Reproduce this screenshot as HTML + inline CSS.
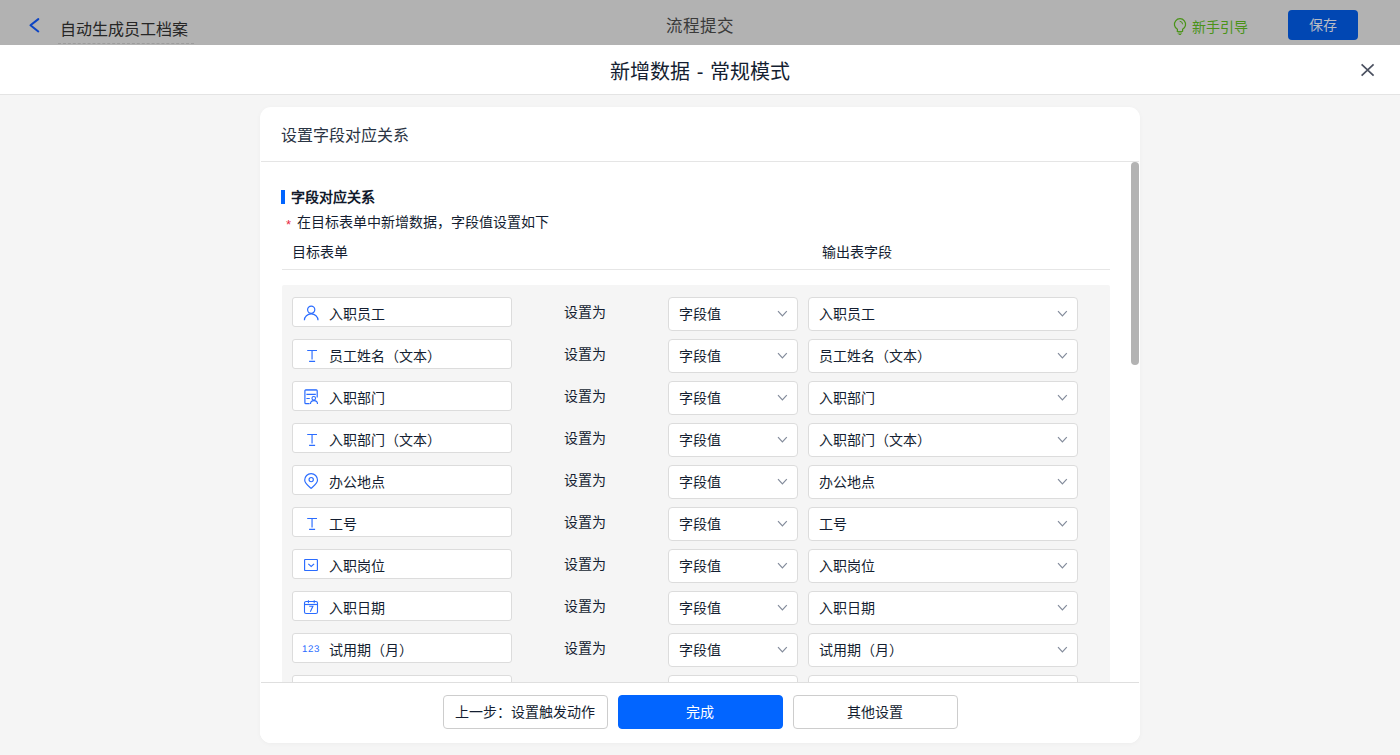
<!DOCTYPE html>
<html lang="zh-CN">
<head>
<meta charset="utf-8">
<title>新增数据 - 常规模式</title>
<style>
*{box-sizing:border-box;margin:0;padding:0}
html,body{width:1400px;height:755px;overflow:hidden}
body{position:relative;background:#f5f5f5;font-family:"Liberation Sans",sans-serif;font-size:14px;color:#141e31;line-height:1}
.abs{position:absolute}
/* top bar (dimmed by overlay) */
#topbar{position:absolute;left:0;top:0;width:1400px;height:45px;background:#b2b2b2}
#topbar .back{position:absolute;left:27px;top:15px}
#topbar .name{position:absolute;left:58px;top:16px;width:136px;height:28px;border-bottom:1px dashed #9c9c9c;font-size:16px;line-height:28px;padding-left:2px;color:#262626;white-space:nowrap}
#topbar .tab{position:absolute;left:600px;top:13px;width:200px;text-align:center;font-size:16.5px;line-height:26px;color:#3a3a3a}
#topbar .guide{position:absolute;left:1192px;top:18px;font-size:14px;line-height:18px;color:#4a9318;white-space:nowrap}
#topbar .bulb{position:absolute;left:1172px;top:17px}
#topbar .save{position:absolute;left:1288px;top:10px;width:70px;height:30px;border-radius:4px;background:#0147b3;color:#b8bcc4;font-size:14px;line-height:30px;text-align:center}
/* header */
#head{position:absolute;left:0;top:45px;width:1400px;height:50px;background:#fff;border-bottom:1px solid #e4e4e4}
#head .title{position:absolute;left:0;top:0;width:1400px;text-align:center;font-size:20px;line-height:54px;word-spacing:0.9px;color:#141e31}
#head .close{position:absolute;left:1360px;top:18px}
/* card */
#card{position:absolute;left:260px;top:107px;width:880px;height:636px;background:#fff;border-radius:11px;box-shadow:0 1px 5px rgba(0,0,0,.035)}
#cardin{position:absolute;left:0;top:0;width:880px;height:636px;border-radius:11px;overflow:hidden}
#card .chead:after{content:"";position:absolute;left:1px;top:54px;width:878px;height:1px;background:#e5e5e5}
#card .chead{position:absolute;left:0;top:0;width:880px;height:55px;font-size:16px;line-height:57px;padding-left:21px;color:#2a3443}
#body{position:absolute;left:0;top:55px;width:880px;height:520px;overflow:hidden}
#thumb{position:absolute;left:871px;top:55px;width:8px;height:203px;border-radius:4px;background:#b3b3b3}
.bar{position:absolute;left:21px;top:28px;width:4px;height:14px;background:#0265ff}
.stitle{position:absolute;left:31px;top:27px;font-size:14px;font-weight:bold;line-height:16px;color:#10192b;white-space:nowrap}
.star{position:absolute;left:26px;top:55.5px;font-size:13px;line-height:13px;color:#e8283f}
.hint{position:absolute;left:37px;top:52px;font-size:14px;line-height:16px;white-space:nowrap}
.col1{position:absolute;left:32px;top:82px;font-size:14px;line-height:16px;white-space:nowrap}
.col2{position:absolute;left:562px;top:82px;font-size:14px;line-height:16px;white-space:nowrap}
.hr{position:absolute;left:22px;top:107px;width:828px;height:1px;background:#e6e6e6}
#rows{position:absolute;left:22px;top:123px;width:828px;height:420px;background:#f5f5f5;border-radius:2px}
.row{position:absolute;left:0;width:828px;height:42px}
.fld{position:absolute;left:10px;top:0;width:220px;height:30px;background:#fff;border:1px solid #dcdcdc;border-radius:3px;line-height:32px;padding-left:36px;white-space:nowrap}
.fld svg,.fld .n123{position:absolute;left:11px;top:7px;overflow:visible}
.fld svg.n123{left:8.7px;top:10px}
.set{position:absolute;left:282px;top:0;line-height:30px;white-space:nowrap}
.sel{position:absolute;top:0;height:34px;background:#fff;border:1px solid #dcdcdc;border-radius:4px;line-height:33px;padding-left:10px;white-space:nowrap}
.s1{left:386px;width:130px}
.s2{left:526px;width:270px}
.sel svg{position:absolute;right:9px;top:12px}
/* footer */
#foot{position:absolute;left:0;top:575px;width:880px;height:61px;background:#fff}
#foot:before{content:"";position:absolute;left:1px;top:0;width:878px;height:1px;background:#dfdfdf}
.btn{position:absolute;top:13px;width:165px;height:34px;border:1px solid #cdcdcd;border-radius:4px;background:#fff;font-size:14px;line-height:32px;text-align:center;white-space:nowrap;padding-right:2px}
.btn.pri{background:#0265ff;border-color:#0265ff;color:#fff}
</style>
</head>
<body>
<div id="topbar">
  <svg class="back" width="16" height="20" viewBox="0 0 16 20"><path d="M11.3 4.1 L3.5 10.3 L11.3 16.5" fill="none" stroke="#0d44c4" stroke-width="2" stroke-linecap="round" stroke-linejoin="round"/></svg>
  <div class="name">自动生成员工档案</div>
  <div class="tab">流程提交</div>
  <svg class="bulb" width="16" height="20" viewBox="0 0 16 20"><path d="M5.4 14.4V12.3A5.6 5.6 0 1 1 10.6 12.3V14.4" fill="none" stroke="#4a9318" stroke-width="1.25"/><path d="M4.8 14.5h6.1M5.6 16h4.5M6.7 17.5h2.4" stroke="#4a9318" stroke-width="0.95" fill="none"/><path d="M7.7 4.3A3 3 0 0 1 10.6 7.3" stroke="#4a9318" stroke-width="1" fill="none"/></svg>
  <div class="guide">新手引导</div>
  <div class="save">保存</div>
</div>
<div id="head">
  <div class="title">新增数据 - 常规模式</div>
  <svg class="close" width="15" height="15" viewBox="0 0 15 15"><path d="M1.6 1.4 L13.6 12.7 M13.6 1.4 L1.6 12.7" stroke="#4b5160" stroke-width="1.7" fill="none"/></svg>
</div>
<div id="card"><div id="cardin">
  <div class="chead">设置字段对应关系</div>
  <div id="body">
    <div class="bar"></div>
    <div class="stitle">字段对应关系</div>
    <div class="star">*</div>
    <div class="hint">在目标表单中新增数据，字段值设置如下</div>
    <div class="col1">目标表单</div>
    <div class="col2">输出表字段</div>
    <div class="hr"></div>
    <div id="rows">
      <div class="row" style="top:12px"><div class="fld"><svg width="16" height="17" viewBox="0 0 16 17"><circle cx="7.2" cy="4.7" r="3.6" fill="none" stroke="#2a6cff" stroke-width="1.2"/><path d="M0.4 15.3a6.8 6.4 0 0 1 13.6 0" fill="none" stroke="#2a6cff" stroke-width="1.2"/></svg>入职员工</div><div class="set">设置为</div><div class="sel s1">字段值<svg width="11" height="8" viewBox="0 0 11 8"><path d="M1 1.2l4.4 4.7 4.4-4.7" fill="none" stroke="#838b9b" stroke-width="1.2"/></svg></div><div class="sel s2">入职员工<svg width="11" height="8" viewBox="0 0 11 8"><path d="M1 1.2l4.4 4.7 4.4-4.7" fill="none" stroke="#838b9b" stroke-width="1.2"/></svg></div></div>
      <div class="row" style="top:54px"><div class="fld"><svg width="16" height="16" viewBox="0 0 16 16"><path d="M3.2 3.5h9.8M8.05 3.5v9M5.1 14.4h6" fill="none" stroke="#2a6cff" stroke-width="1.15"/></svg>员工姓名（文本）</div><div class="set">设置为</div><div class="sel s1">字段值<svg width="11" height="8" viewBox="0 0 11 8"><path d="M1 1.2l4.4 4.7 4.4-4.7" fill="none" stroke="#838b9b" stroke-width="1.2"/></svg></div><div class="sel s2">员工姓名（文本）<svg width="11" height="8" viewBox="0 0 11 8"><path d="M1 1.2l4.4 4.7 4.4-4.7" fill="none" stroke="#838b9b" stroke-width="1.2"/></svg></div></div>
      <div class="row" style="top:96px"><div class="fld"><svg width="16" height="17" viewBox="0 0 16 17"><path d="M5.6 14.6H1.8a0.9 0.9 0 0 1-0.9-0.9V1.8a0.9 0.9 0 0 1 0.9-0.9h10.5a0.9 0.9 0 0 1 0.9 0.9V8.4" fill="none" stroke="#2a6cff" stroke-width="1.2"/><path d="M1.4 1.15h11.3" stroke="#2a6cff" stroke-width="0.5"/><path d="M2.4 5.35h9.4M2.4 9.5h3.4" stroke="#2a6cff" stroke-width="1.1"/><circle cx="9.75" cy="9.3" r="1.8" fill="none" stroke="#2a6cff" stroke-width="1.1"/><path d="M6.5 15a3.5 3.4 0 0 1 7 0" fill="none" stroke="#2a6cff" stroke-width="1.1"/></svg>入职部门</div><div class="set">设置为</div><div class="sel s1">字段值<svg width="11" height="8" viewBox="0 0 11 8"><path d="M1 1.2l4.4 4.7 4.4-4.7" fill="none" stroke="#838b9b" stroke-width="1.2"/></svg></div><div class="sel s2">入职部门<svg width="11" height="8" viewBox="0 0 11 8"><path d="M1 1.2l4.4 4.7 4.4-4.7" fill="none" stroke="#838b9b" stroke-width="1.2"/></svg></div></div>
      <div class="row" style="top:138px"><div class="fld"><svg width="16" height="16" viewBox="0 0 16 16"><path d="M3.2 3.5h9.8M8.05 3.5v9M5.1 14.4h6" fill="none" stroke="#2a6cff" stroke-width="1.15"/></svg>入职部门（文本）</div><div class="set">设置为</div><div class="sel s1">字段值<svg width="11" height="8" viewBox="0 0 11 8"><path d="M1 1.2l4.4 4.7 4.4-4.7" fill="none" stroke="#838b9b" stroke-width="1.2"/></svg></div><div class="sel s2">入职部门（文本）<svg width="11" height="8" viewBox="0 0 11 8"><path d="M1 1.2l4.4 4.7 4.4-4.7" fill="none" stroke="#838b9b" stroke-width="1.2"/></svg></div></div>
      <div class="row" style="top:180px"><div class="fld"><svg width="16" height="18" viewBox="0 0 16 18"><path d="M7.1 15.3C3.9 12.5 0.7 10.3 0.7 7a6.4 6.4 0 0 1 12.8 0C13.5 10.3 10.3 12.5 7.1 15.3z" fill="none" stroke="#2a6cff" stroke-width="1.15" stroke-linejoin="round"/><circle cx="7.2" cy="6.6" r="2.15" fill="none" stroke="#2a6cff" stroke-width="1.15"/></svg>办公地点</div><div class="set">设置为</div><div class="sel s1">字段值<svg width="11" height="8" viewBox="0 0 11 8"><path d="M1 1.2l4.4 4.7 4.4-4.7" fill="none" stroke="#838b9b" stroke-width="1.2"/></svg></div><div class="sel s2">办公地点<svg width="11" height="8" viewBox="0 0 11 8"><path d="M1 1.2l4.4 4.7 4.4-4.7" fill="none" stroke="#838b9b" stroke-width="1.2"/></svg></div></div>
      <div class="row" style="top:222px"><div class="fld"><svg width="16" height="16" viewBox="0 0 16 16"><path d="M3.2 3.5h9.8M8.05 3.5v9M5.1 14.4h6" fill="none" stroke="#2a6cff" stroke-width="1.15"/></svg>工号</div><div class="set">设置为</div><div class="sel s1">字段值<svg width="11" height="8" viewBox="0 0 11 8"><path d="M1 1.2l4.4 4.7 4.4-4.7" fill="none" stroke="#838b9b" stroke-width="1.2"/></svg></div><div class="sel s2">工号<svg width="11" height="8" viewBox="0 0 11 8"><path d="M1 1.2l4.4 4.7 4.4-4.7" fill="none" stroke="#838b9b" stroke-width="1.2"/></svg></div></div>
      <div class="row" style="top:264px"><div class="fld"><svg width="16" height="16" viewBox="0 0 16 16"><rect x="0.6" y="2.5" width="12.8" height="11" rx="0.5" fill="none" stroke="#2a6cff" stroke-width="1.15"/><path d="M4.3 6.8l2.9 2.7 2.9-2.7" fill="none" stroke="#2a6cff" stroke-width="1.1"/></svg>入职岗位</div><div class="set">设置为</div><div class="sel s1">字段值<svg width="11" height="8" viewBox="0 0 11 8"><path d="M1 1.2l4.4 4.7 4.4-4.7" fill="none" stroke="#838b9b" stroke-width="1.2"/></svg></div><div class="sel s2">入职岗位<svg width="11" height="8" viewBox="0 0 11 8"><path d="M1 1.2l4.4 4.7 4.4-4.7" fill="none" stroke="#838b9b" stroke-width="1.2"/></svg></div></div>
      <div class="row" style="top:306px"><div class="fld"><svg width="16" height="16" viewBox="0 0 16 16"><rect x="0.5" y="2.45" width="13" height="12.1" rx="1.6" fill="none" stroke="#2a6cff" stroke-width="1.1"/><path d="M0.5 5.5h13" stroke="#2a6cff" stroke-width="1.15"/><path d="M4.4 1.2v3M10.2 1.2v3" stroke="#2a6cff" stroke-width="1"/><path d="M5.2 7.3h3.7l-2.6 5.4" fill="none" stroke="#2a6cff" stroke-width="1.1"/></svg>入职日期</div><div class="set">设置为</div><div class="sel s1">字段值<svg width="11" height="8" viewBox="0 0 11 8"><path d="M1 1.2l4.4 4.7 4.4-4.7" fill="none" stroke="#838b9b" stroke-width="1.2"/></svg></div><div class="sel s2">入职日期<svg width="11" height="8" viewBox="0 0 11 8"><path d="M1 1.2l4.4 4.7 4.4-4.7" fill="none" stroke="#838b9b" stroke-width="1.2"/></svg></div></div>
      <div class="row" style="top:348px"><div class="fld"><svg class="n123" width="22" height="10"><text x="0" y="8" font-size="9.7" letter-spacing="0.65" fill="#2a6cff" text-rendering="geometricPrecision" font-family="Liberation Sans, sans-serif">123</text></svg>试用期（月）</div><div class="set">设置为</div><div class="sel s1">字段值<svg width="11" height="8" viewBox="0 0 11 8"><path d="M1 1.2l4.4 4.7 4.4-4.7" fill="none" stroke="#838b9b" stroke-width="1.2"/></svg></div><div class="sel s2">试用期（月）<svg width="11" height="8" viewBox="0 0 11 8"><path d="M1 1.2l4.4 4.7 4.4-4.7" fill="none" stroke="#838b9b" stroke-width="1.2"/></svg></div></div>
      <div class="row" style="top:390px"><div class="fld"></div><div class="sel s1"></div><div class="sel s2"></div></div>
    </div>
  </div>
  <div id="thumb"></div>
  <div id="foot">
    <div class="btn" style="left:183px">上一步：设置触发动作</div>
    <div class="btn pri" style="left:358px">完成</div>
    <div class="btn" style="left:533px">其他设置</div>
  </div>
</div></div>
</body>
</html>
